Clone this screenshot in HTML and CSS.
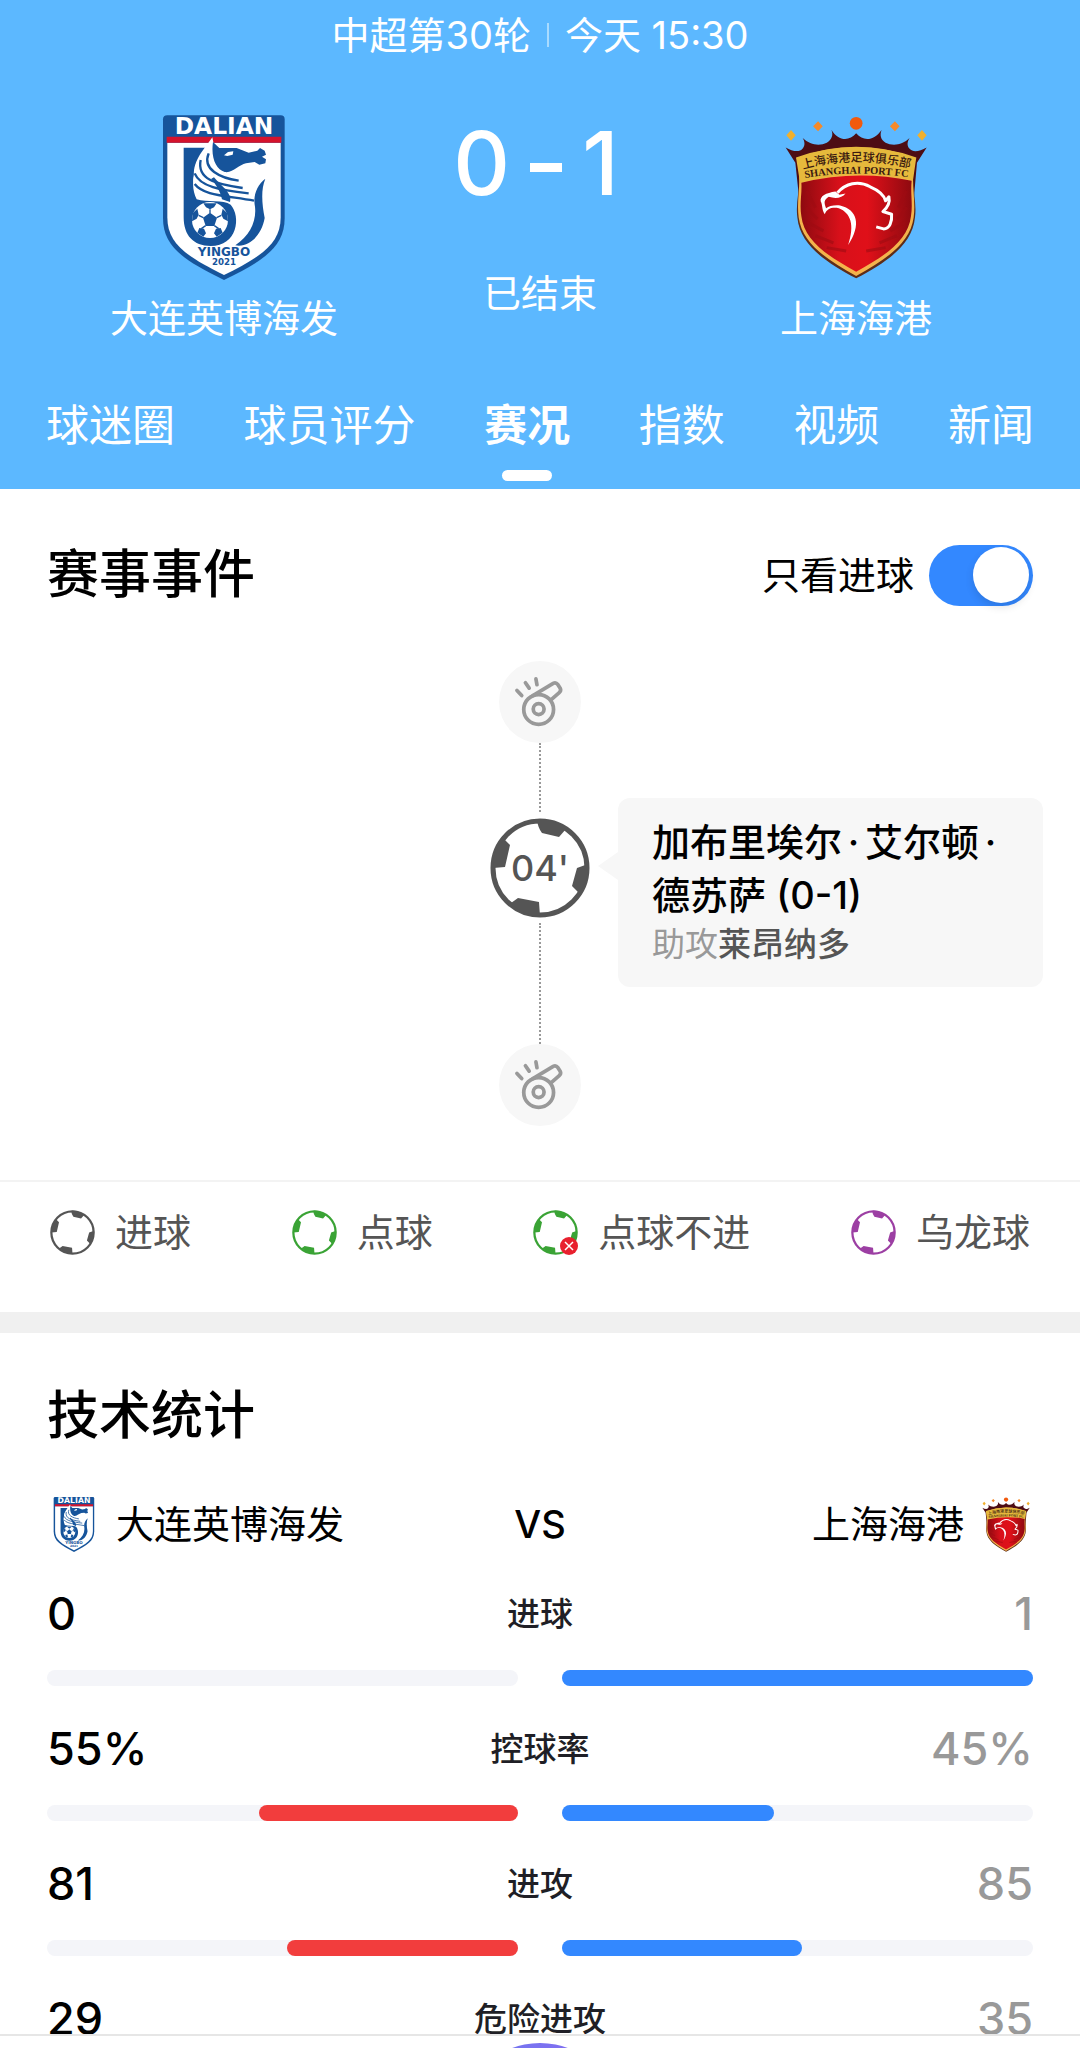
FILE: index.html
```html
<!DOCTYPE html>
<html lang="zh-CN">
<head>
<meta charset="utf-8">
<meta name="viewport" content="width=device-width, initial-scale=1">
<title>大连英博海发 0-1 上海海港</title>
<link rel="stylesheet" href="styles.css">
</head>
<body>
<svg class="sprite" aria-hidden="true">
  <defs>
    <linearGradient id="port-red" x1="0" y1="0" x2="1" y2="0">
      <stop offset="0" stop-color="#8e0a10"/><stop offset=".35" stop-color="#d8101a"/><stop offset=".6" stop-color="#e01019"/><stop offset="1" stop-color="#8e0a10"/>
    </linearGradient>
    <path id="port-arc-cn" d="M88 208Q258 158 430 206"/>
    <path id="port-arc-en" d="M92 234Q258 204 426 232"/>
  </defs>
  <symbol id="crest-dalian" viewBox="68 43 368 495">
    <path fill="#16549b" d="M82 44H422Q434 44 434 56V352C434 440 370 480 252 538C134 480 69 440 69 352V56Q69 44 82 44Z"/>
    <path fill="#fff" d="M82 126H422V350C422 430 364 467 252 523C140 467 82 430 82 350Z"/>
    <path fill="#d5132c" d="M80 108H424V126H80Z"/>
    <path fill="#16549b" d="M131 141H203C196 158 178 172 168 190C156 240 156 266 170 296C200 306 250 296 272 312C304 348 292 436 212 436C160 436 131 404 131 350Z"/>
    <path fill="#fff" d="M217 110C196 142 158 178 162 226C158 236 160 262 176 286C196 306 240 298 262 302L344 308C338 272 306 240 266 222C226 200 206 168 222 134Z"/>
    <path fill="#16549b" d="M219 124L238 142H290L326 156L352 150L360 142L374 150L378 162L366 168L378 176L376 188L358 192L344 184L318 188C296 192 280 218 254 214C228 206 212 172 219 124Z"/>
    <path fill="#fff" d="M252 164L264 154L280 152L278 162L262 166Z"/>
    <path fill="none" stroke="#16549b" stroke-width="7" d="M206 158C186 206 240 232 296 240M182 178C170 236 226 250 308 262M164 218C180 258 240 268 326 278M164 250C190 284 250 284 342 300"/>
    <path fill="#16549b" d="M222 230C246 258 278 280 270 304L246 296C240 268 226 250 214 234Z"/>
    <path fill="#16549b" d="M376 234C352 252 338 284 345 318C350 362 330 404 286 434C330 442 366 400 374 352C366 310 362 268 376 234Z"/>
    <circle cx="210" cy="358" r="54" fill="#fff"/>
    <path fill="#16549b" d="M210 336L231 351L223 376H197L189 351ZM190 308H230L222 320L210 326L198 320ZM158 338L172 324L176 342L170 354L156 362ZM262 338L248 324L244 342L250 354L264 362ZM172 396L178 382L192 384L198 398L190 408ZM248 396L242 382L228 384L222 398L230 408Z"/>
    <path stroke="#16549b" stroke-width="4" d="M210 326V338M176 344L190 351M244 344L230 351M184 384L197 375M236 384L223 375"/>
    <text x="252" y="101" class="crest-name" fill="#fff">DALIAN</text>
    <text x="252" y="467" class="crest-club" fill="#16549b">YINGBO</text>
    <text x="252" y="494" class="crest-year" fill="#16549b">2021</text>
  </symbol>
  <symbol id="crest-port" viewBox="45 45 425 490">
    <path fill="#4d0d14" d="M47 140C68 152 88 156 98 143C106 134 104 122 98 112C120 134 150 136 170 126C186 116 190 102 184 88C204 120 236 124 258 98C280 124 312 120 334 88C328 104 332 118 346 126C366 136 396 134 418 112C410 124 410 136 418 144C428 156 448 152 469 140L440 186L430 300Q258 220 88 300L76 186Z"/>
    <path fill="#5e2c18" d="M78 170C102 240 74 290 82 350C90 430 160 480 258 532C356 480 426 430 434 350C442 290 414 240 438 170Z"/>
    <path fill="#f4b34c" d="M80 172Q258 106 436 172C418 240 438 290 430 350C420 424 354 472 258 525C162 472 96 424 86 350C78 290 98 240 80 172Z"/>
    <path fill="#e6b93c" d="M78 170Q258 106 438 170L428 238Q258 200 90 246Z"/>
    <path fill="url(#port-red)" d="M94 246Q258 206 424 240C420 280 428 310 422 346C414 416 350 462 258 512C166 462 102 416 94 346C88 310 96 280 94 246Z"/>
    <path fill="none" stroke="#9e0b13" stroke-width="9" opacity=".6" d="M110 270L136 320M108 320L142 354M112 364L160 390M136 404L190 426M170 440L228 450M408 270L384 320M410 320L380 354M404 364L360 390M380 404L328 426M346 440L288 450"/>
    <path fill="none" stroke="#fff" stroke-width="9" stroke-linejoin="round" d="M202 276C226 248 264 238 300 258C328 270 342 284 346 300L356 288C360 306 354 318 338 332L364 340C366 362 358 384 340 384L318 378"/>
    <path fill="#fff" d="M196 272C168 276 148 286 152 302C158 312 154 326 164 340C170 322 188 318 206 322C242 336 254 372 234 432C274 372 262 326 210 314C192 312 176 316 168 322C162 306 160 298 176 288C196 294 216 292 226 278L208 282Z"/>
    <text class="port-cn" fill="#3b1a10"><textPath href="#port-arc-cn" startOffset="50%">上海海港足球俱乐部</textPath></text>
    <text class="port-en" fill="#3b1a10"><textPath href="#port-arc-en" startOffset="50%">SHANGHAI PORT FC</textPath></text>
    <circle cx="258" cy="68" r="19" fill="#f15a0e"/>
    <path fill="#f58a2a" d="M144 62L158 77L144 92L129 77ZM374 62L388 77L374 92L359 77Z"/>
    <path fill="#f1b02e" d="M63 88L77 104L63 120L49 104ZM455 88L469 104L455 120L441 104Z"/>
  </symbol>
  <symbol id="ball" viewBox="0 0 100 100">
    <circle cx="50" cy="50" r="47" fill="none" stroke="currentColor" stroke-width="5"/>
    <path fill="currentColor" d="M47 2C58 0 68 4 76 11L69 19L52 15Q48 10 47 2ZM14 21L20 27L15 49L3 50Q2 34 14 21ZM98 46L87 50L82 68L89 75Q98 64 98 46ZM21 85L28 80L49 84L50 98Q34 98 21 85Z"/>
  </symbol>
  <symbol id="whistle" viewBox="60 36 242 242">
    <g fill="none" stroke="#999" stroke-width="11" stroke-linecap="round" stroke-linejoin="round">
      <circle cx="177" cy="179" r="44"/><circle cx="177" cy="178" r="16"/>
      <path d="M160 138L220 102Q228 98 234 106L241 117Q244 124 237 130L215 149M113 123L127 138M138 100L149 116M169 89L172 106"/>
    </g>
  </symbol>
</svg>

<div class="app">
  <main class="page">
    <header class="match">
      <p class="match-info"><span>中超第30轮</span><i class="match-sep"></i><span>今天 15:30</span></p>
      <div class="scoreboard">
        <div class="team">
          <svg class="crest" role="img" aria-label="大连英博海发队徽"><use href="#crest-dalian"/></svg>
          <span>大连英博海发</span>
        </div>
        <div class="result">
          <strong class="score"><span>0</span><i class="score-dash"></i><span>1</span></strong>
          <span>已结束</span>
        </div>
        <div class="team">
          <svg class="crest" role="img" aria-label="上海海港队徽"><use href="#crest-port"/></svg>
          <span>上海海港</span>
        </div>
      </div>
      <nav class="tabs">
        <a href="#fans">球迷圈</a>
        <a href="#ratings">球员评分</a>
        <a href="#events" class="active" aria-current="page">赛况</a>
        <a href="#odds">指数</a>
        <a href="#video">视频</a>
        <a href="#news">新闻</a>
      </nav>
    </header>

    <section class="events" id="events">
      <div class="events-head">
        <h2>赛事事件</h2>
        <label class="goal-filter" for="goals-only">只看进球
          <input type="checkbox" role="switch" id="goals-only" class="switch" checked>
        </label>
      </div>
      <div class="timeline">
        <svg class="whistle whistle-start"><use href="#whistle"/></svg>
        <i class="line line-first"></i>
        <div class="minute"><svg class="minute-ball"><use href="#ball"/></svg><span>04'</span></div>
        <i class="line line-last"></i>
        <svg class="whistle whistle-end"><use href="#whistle"/></svg>
        <div class="bubble">
          <p class="scorer">加布里埃尔<span class="dot">·</span>艾尔顿<span class="dot">·</span><br>德苏萨 (0-1)</p>
          <p class="assist">助攻<b>莱昂纳多</b></p>
        </div>
      </div>
      <ul class="legend">
        <li><svg class="legend-ball goal"><use href="#ball"/></svg>进球</li>
        <li><svg class="legend-ball penalty"><use href="#ball"/></svg>点球</li>
        <li><span class="missed"><svg class="legend-ball penalty"><use href="#ball"/></svg><svg class="miss-mark" viewBox="0 0 18 18"><circle cx="9" cy="9" r="9" fill="#e8202e"/><path d="M5 5L13 13M13 5L5 13" stroke="#fff" stroke-width="1.5"/></svg></span>点球不进</li>
        <li><svg class="legend-ball own-goal"><use href="#ball"/></svg>乌龙球</li>
      </ul>
    </section>

    <section class="stats">
      <h2>技术统计</h2>
      <div class="versus">
        <div class="side"><svg class="mini-crest"><use href="#crest-dalian"/></svg>大连英博海发</div>
        <span class="vs">VS</span>
        <div class="side side-away">上海海港<svg class="mini-crest"><use href="#crest-port"/></svg></div>
      </div>
      <div class="stat">
        <span class="home">0</span><span class="label">进球</span><span class="away">1</span>
        <div class="track track-home"></div>
        <div class="track track-away"><i style="width:100%"></i></div>
      </div>
      <div class="stat">
        <span class="home">55%</span><span class="label">控球率</span><span class="away">45%</span>
        <div class="track track-home"><i style="width:55%"></i></div>
        <div class="track track-away"><i style="width:45%"></i></div>
      </div>
      <div class="stat">
        <span class="home">81</span><span class="label">进攻</span><span class="away">85</span>
        <div class="track track-home"><i style="width:49%"></i></div>
        <div class="track track-away"><i style="width:51%"></i></div>
      </div>
      <div class="stat">
        <span class="home">29</span><span class="label">危险进攻</span><span class="away">35</span>
        <div class="track track-home"><i style="width:45%"></i></div>
        <div class="track track-away"><i style="width:55%"></i></div>
      </div>
    </section>
  </main>
  <footer class="dock"><button type="button" class="dock-button" aria-label="聊天"></button></footer>
</div>
</body>
</html>
```
FILE: styles.css
```css
* { box-sizing: border-box; }

body {
  margin: 0;
  background: #fff;
  color: #000;
  font-family: Inter, "Noto Sans CJK SC", sans-serif;
  font-size: 38px;
  line-height: 56px;
}

p, h2, ul { margin: 0; padding: 0; }
i { display: block; }
svg { display: block; flex: none; }

.sprite { position: absolute; width: 0; height: 0; }

.app { display: flex; flex-direction: column; height: 100vh; }
.page { flex: 1; min-height: 0; overflow: auto; scrollbar-width: none; }

/* Match header */
.match { background: #5cb8ff; color: #fff; padding-top: 7px; }
.match-info { display: flex; justify-content: center; align-items: center; gap: 16px; }
.match-sep { width: 2px; height: 24px; background: #a9dbff; }

.scoreboard { display: grid; grid-template-columns: repeat(3, 1fr); padding: 52px 66px 0; }
.team { display: flex; flex-direction: column; align-items: center; gap: 10px; }
.crest { width: 142px; height: 165px; }
.result { display: flex; flex-direction: column; align-items: center; gap: 54px; }
.score {
  display: flex;
  align-items: center;
  gap: 20px;
  padding-right: 8px;
  font-size: 88px;
  font-weight: 500;
  line-height: 96px;
}
.score-dash { width: 32px; height: 9px; margin-top: 8px; background: #fff; }

.tabs { display: flex; justify-content: space-between; padding: 47px 46px 8px; font-size: 43px; line-height: 64px; }
.tabs a { display: flex; flex-direction: column; align-items: center; color: inherit; text-decoration: none; }
.tabs a::after { content: ""; width: 50px; height: 11px; margin-top: 13px; border-radius: 6px; }
.tabs .active { font-weight: 700; }
.tabs .active::after { background: #fff; }

/* Crest lettering, sized in the crests' own units */
.crest-name, .crest-club, .crest-year { font-family: "DejaVu Sans", sans-serif; font-weight: 700; text-anchor: middle; }
.crest-name { font-size: 70px; }
.crest-club { font-size: 36px; }
.crest-year { font-size: 26px; }
.port-cn { font-family: "Noto Sans CJK SC", sans-serif; font-size: 36px; font-weight: 500; text-anchor: middle; }
.port-en { font-family: "Liberation Serif", serif; font-size: 31px; font-weight: 700; text-anchor: middle; }

/* Events */
h2 { font-size: 52px; font-weight: 500; line-height: 76px; }
.events-head { display: flex; justify-content: space-between; align-items: center; padding: 48px 47px 0; }
.goal-filter { display: flex; align-items: center; gap: 15px; }
.switch {
  appearance: none;
  display: flex;
  justify-content: flex-start;
  align-items: center;
  width: 104px;
  height: 61px;
  margin: 0;
  padding: 0 4px;
  border-radius: 31px;
  background: #ccc;
}
.switch:checked { justify-content: flex-end; background: #3388ff; }
.switch::before { content: ""; width: 56px; height: 56px; border-radius: 50%; background: #fff; box-shadow: 0 4px 8px rgb(0 0 0 / 12%); }

.timeline {
  display: grid;
  grid-template-columns: 1fr 100px 1fr;
  grid-template-rows: 82px 75px 100px 126px 82px;
  justify-items: center;
  padding: 48px 37px 54px;
}
.whistle { width: 82px; height: 82px; border-radius: 50%; background: #f7f7f7; }
.whistle-start { grid-area: 1 / 2; }
.line { width: 0; border-left: 2px dotted #999; }
.line-first { grid-area: 2 / 2; margin-bottom: 6px; }
.line-last { grid-area: 4 / 2; margin-top: 5px; }
.whistle-end { grid-area: 5 / 2; }
.minute { grid-area: 3 / 2; display: grid; place-items: center; color: #555; font-size: 36px; font-weight: 500; }
.minute > * { grid-area: 1 / 1; }
.minute-ball { width: 100px; height: 100px; }

.bubble {
  grid-area: 2 / 3 / 5 / 4;
  place-self: start stretch;
  position: relative;
  margin: 55px 0 0 28px;
  padding: 18px 34px 21px;
  border-radius: 12px;
  background: #f7f7f7;
}
.bubble::before {
  content: "";
  position: absolute;
  top: 54px;
  left: -20px;
  border: solid transparent;
  border-width: 14px 20px 14px 0;
  border-right-color: #f7f7f7;
}
.scorer { font-weight: 500; line-height: 53px; white-space: nowrap; }
.dot { display: inline-block; width: 23px; text-align: center; }
.assist { color: #999; font-size: 33px; line-height: 44px; }
.assist b { color: #555; font-weight: 500; }

.legend {
  display: flex;
  justify-content: space-between;
  padding: 22px 50px 52px;
  border-top: 2px solid #f3f3f3;
  color: #555;
  list-style: none;
}
.legend li { display: flex; align-items: center; gap: 20px; }
.legend-ball { width: 45px; height: 45px; }
.goal { color: #555; }
.penalty { color: #3aa335; }
.own-goal { color: #9c3fa3; }
.missed { position: relative; }
.miss-mark { position: absolute; right: 0; bottom: 0; width: 18px; height: 18px; }

/* Statistics */
.stats { padding: 45px 47px 0; border-top: 21px solid #f0f0f0; }
.versus { display: grid; grid-template-columns: 1fr auto 1fr; align-items: center; padding: 42px 0 34px; }
.side { display: flex; align-items: center; gap: 15px; }
.side-away { justify-content: flex-end; }
.mini-crest { width: 54px; height: 55px; }
.vs { font-weight: 500; }

.stat { display: grid; grid-template-columns: repeat(4, 1fr); align-items: center; margin-bottom: 35px; }
.home, .away { font-size: 45px; font-weight: 500; }
.away { color: #999; text-align: right; }
.label { grid-column: span 2; text-align: center; color: #1f1f26; font-size: 33px; font-weight: 500; }
.track { grid-column: span 2; display: flex; height: 16px; margin-top: 28px; border-radius: 8px; background: #f4f5f9; }
.track i { border-radius: 8px; }
.track-home { justify-content: flex-end; margin-right: 22px; }
.track-home i { background: #f23d3d; }
.track-away { margin-left: 22px; }
.track-away i { background: #3388ff; }

/* Bottom dock */
.dock { display: flex; justify-content: center; align-items: flex-start; height: 14px; padding-top: 7px; border-top: 2px solid #e6e6e6; background: #fff; overflow: hidden; }
.dock-button { flex: none; width: 160px; height: 160px; padding: 0; border: 0; border-radius: 50%; background: linear-gradient(90deg, #6b78f0, #8a6cf0); }
```
